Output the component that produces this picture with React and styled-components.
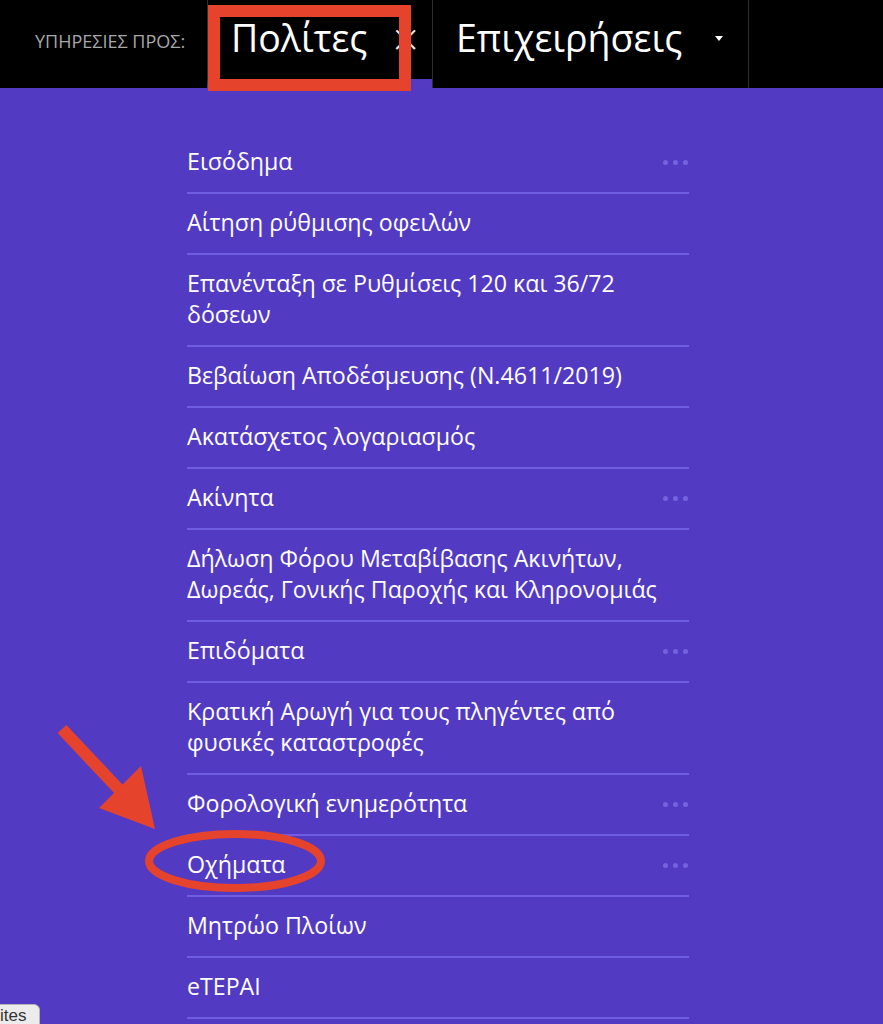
import React from "react";
import styled, { createGlobalStyle } from "styled-components";

const PURPLE = "#533ac3";
const RED = "#e5432b";

const GlobalStyle = createGlobalStyle`
  html, body {
    margin: 0;
    padding: 0;
    background: ${PURPLE};
    font-family: "Open Sans", "Noto Sans", sans-serif;
  }
`;

const Page = styled.div`
  position: relative;
  width: 883px;
  height: 1024px;
  overflow: hidden;
  background: ${PURPLE};
`;

const Header = styled.div`
  display: flex;
  height: 88px;
  background: #000;
`;

const Label = styled.div`
  width: 172px;
  padding: 29px 0 0 35px;
  font-size: 18px;
  line-height: 24px;
  color: #a8a8a8;
  white-space: nowrap;
`;

const Tab = styled.div`
  display: flex;
  align-items: flex-start;
  box-sizing: border-box;
  width: ${props => props.width}px;
  padding: 13px 0 0 23px;
  border-left: 1px solid #2e2e2e;
  border-right: ${props => (props.last ? "1px solid #2e2e2e" : "none")};
  border-bottom: ${props => (props.active ? `9px solid ${PURPLE}` : "none")};
  color: #fff;
  font-size: 37.5px;
  line-height: 50px;
  white-space: nowrap;
`;

const Close = styled.span`
  margin-left: 25px;
  font-size: 46px;
  font-weight: 300;
  line-height: 50px;
  color: #eee;
`;

const Caret = styled.span`
  margin: 23px 0 0 33px;
  width: 0;
  height: 0;
  border-left: 4px solid transparent;
  border-right: 4px solid transparent;
  border-top: 5px solid #fff;
`;

const List = styled.ul`
  list-style: none;
  margin: 0 0 0 187px;
  padding: 45px 0 0;
  width: 502px;
`;

const Item = styled.li`
  display: flex;
  justify-content: space-between;
  align-items: flex-start;
  padding: 13px 0 15px;
  border-bottom: 2px solid #6f5fe0;
  color: #fff;
  font-size: 23.2px;
  font-weight: 500;
  line-height: 31px;
  white-space: nowrap;
`;

const Dots = styled.span`
  display: flex;
  gap: 5px;
  margin-top: 14px;
  margin-right: 1px;
  span {
    width: 5px;
    height: 5px;
    border-radius: 50%;
    background: #7463dc;
  }
`;

const Marks = styled.svg`
  position: absolute;
  left: 0;
  top: 0;
  pointer-events: none;
`;

const StatusTip = styled.div`
  position: absolute;
  left: -1px;
  bottom: -2px;
  width: 41px;
  height: 22px;
  box-sizing: border-box;
  background: #ececec;
  border: 1px solid #b5b5b5;
  border-top-right-radius: 6px;
  font-family: "Liberation Sans", sans-serif;
  font-size: 17px;
  line-height: 22px;
  color: #333;
  overflow: hidden;
`;

const items = [
  { lines: ["Εισόδημα"], more: true },
  { lines: ["Αίτηση ρύθμισης οφειλών"] },
  { lines: ["Επανένταξη σε Ρυθμίσεις 120 και 36/72", "δόσεων"] },
  { lines: ["Βεβαίωση Αποδέσμευσης (Ν.4611/2019)"] },
  { lines: ["Ακατάσχετος λογαριασμός"] },
  { lines: ["Ακίνητα"], more: true },
  { lines: ["Δήλωση Φόρου Μεταβίβασης Ακινήτων,", "Δωρεάς, Γονικής Παροχής και Κληρονομιάς"] },
  { lines: ["Επιδόματα"], more: true },
  { lines: ["Κρατική Αρωγή για τους πληγέντες από", "φυσικές καταστροφές"] },
  { lines: ["Φορολογική ενημερότητα"], more: true },
  { lines: ["Οχήματα"], more: true },
  { lines: ["Μητρώο Πλοίων"] },
  { lines: ["eTEPAI"] }
];

export default function App() {
  return (
    <Page>
      <GlobalStyle />
      <Header>
        <Label>ΥΠΗΡΕΣΙΕΣ ΠΡΟΣ:</Label>
        <Tab width={225} active>
          Πολίτες
          <Close>×</Close>
        </Tab>
        <Tab width={317} last>
          Επιχειρήσεις
          <Caret />
        </Tab>
      </Header>

      <List>
        {items.map((item, i) => (
          <Item key={i}>
            <span>
              {item.lines.map((line, j) => (
                <div key={j}>{line}</div>
              ))}
            </span>
            {item.more && (
              <Dots>
                <span />
                <span />
                <span />
              </Dots>
            )}
          </Item>
        ))}
      </List>

      {/* annotations drawn over the screenshot */}
      <Marks width="883" height="1024" viewBox="0 0 883 1024">
        <rect x="214" y="11" width="191" height="74" fill="none" stroke={RED} strokeWidth="12" />
        <line x1="62" y1="729" x2="126" y2="797" stroke={RED} strokeWidth="12" />
        <polygon points="155,829 99,808 141,766" fill={RED} />
        <ellipse cx="235" cy="861" rx="86" ry="27" fill="none" stroke={RED} strokeWidth="8" />
      </Marks>

      <StatusTip>ites</StatusTip>
    </Page>
  );
}
